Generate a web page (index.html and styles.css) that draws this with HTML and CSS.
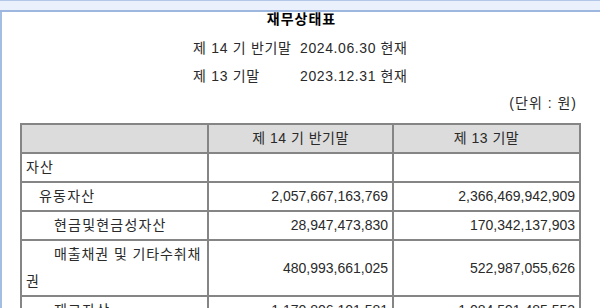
FILE: index.html
```html
<!DOCTYPE html>
<html lang="ko">
<head>
<meta charset="utf-8">
<link rel="stylesheet" href="styles.css">
</head>
<body>
<div class="topbar"></div>
<div class="frame">
  <div class="title">재무상태표</div>
  <div class="period"><span class="plabel">제 14 기 반기말</span><span class="pdate">2024.06.30 현재</span></div>
  <div class="period"><span class="plabel">제 13 기말</span><span class="pdate">2023.12.31 현재</span></div>
  <div class="unit">(단위 : 원)</div>
  <table class="fs">
    <colgroup><col class="c1"><col class="c2"><col class="c3"></colgroup>
    <thead>
      <tr><th></th><th>제 14 기 반기말</th><th>제 13 기말</th></tr>
    </thead>
    <tbody>
      <tr><td class="lbl">자산</td><td></td><td></td></tr>
      <tr><td class="lbl i1">유동자산</td><td class="num">2,057,667,163,769</td><td class="num">2,366,469,942,909</td></tr>
      <tr><td class="lbl i2">현금및현금성자산</td><td class="num">28,947,473,830</td><td class="num">170,342,137,903</td></tr>
      <tr><td class="lbl wrap"><span class="ind2"></span>매출채권 및 기타수취채권</td><td class="num">480,993,661,025</td><td class="num">522,987,055,626</td></tr>
      <tr><td class="lbl i2">재고자산</td><td class="num">1,170,806,101,581</td><td class="num">1,084,591,485,553</td></tr>
    </tbody>
  </table>
</div>
</body>
</html>
```
FILE: styles.css
```css
html, body {
  margin: 0;
  padding: 0;
  background: #ffffff;
  overflow: hidden;
}
body {
  font-family: "Liberation Sans", "Noto Sans CJK KR", sans-serif;
  font-size: 14px;
  color: #2a2a2a;
  width: 600px;
  height: 308px;
}
.topbar {
  height: 9px;
  background: #eaf1fc;
  border-top: 1px solid #b3c8e8;
  border-bottom: 2px solid #9db7de;
}
.frame {
  border-left: 2px solid #a3bde3;
  height: 300px;
  padding-left: 18px;
  padding-right: 19px;
}
.title {
  text-align: center;
  font-weight: bold;
  line-height: 14px;
  font-size: 14px;
  letter-spacing: 1px;
  color: #000;
  padding-left: 2px;
}
.period {
  line-height: 28px;
  display: flex;
  padding-left: 173px;
}
.title + .period { margin-top: 8px; }
.plabel {
  width: 107px;
  letter-spacing: 0.7px;
}
.pdate {
  letter-spacing: 0.6px;
}
.unit {
  text-align: right;
  line-height: 28px;
  margin-top: -1px;
  padding-right: 4px;
  letter-spacing: 1px;
}
table.fs {
  margin-top: 6px;
  width: 560px;
  border-collapse: collapse;
  table-layout: fixed;
  border: 1px solid #333;
}
col.c1 { width: 187px; }
col.c2 { width: 185px; }
col.c3 { width: 187px; }
th, td {
  border: 2px solid #858585;
  padding: 0 4px;
  line-height: 27px;
  font-weight: normal;
  vertical-align: middle;
}
th {
  background: #dcdcdc;
  text-align: center;
  height: 26px;
  letter-spacing: 0.5px;
}
td { height: 27px; }
td.num { text-align: right; }
td.lbl { text-align: left; padding-left: 4px; letter-spacing: 1.2px; }
td.wrap { letter-spacing: 0.9px; word-break: break-all; padding-right: 2px; }
td.i1 { padding-left: 17px; }
td.i2 { padding-left: 32px; }
.ind2 { display: inline-block; width: 28px; }
```
